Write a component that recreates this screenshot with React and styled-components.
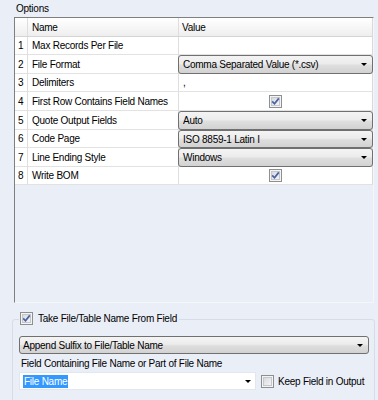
import React from "react";
import styled, { createGlobalStyle } from "styled-components";

const GlobalStyle = createGlobalStyle`
  body {
    margin: 0;
    background: #eaeef7;
  }
`;

const rows = [
  { n: 1, name: "Max Records Per File", kind: "text", value: "" },
  { n: 2, name: "File Format", kind: "combo", value: "Comma Separated Value (*.csv)" },
  { n: 3, name: "Delimiters", kind: "text", value: "," },
  { n: 4, name: "First Row Contains Field Names", kind: "check", value: true },
  { n: 5, name: "Quote Output Fields", kind: "combo", value: "Auto" },
  { n: 6, name: "Code Page", kind: "combo", value: "ISO 8859-1 Latin I" },
  { n: 7, name: "Line Ending Style", kind: "combo", value: "Windows" },
  { n: 8, name: "Write BOM", kind: "check", value: true },
];

const heights = [18, 19, 18, 19, 19, 18, 19, 18];

const Page = styled.div`
  width: 378px;
  height: 400px;
  overflow: hidden;
  background: #eaeef7;
  padding: 3px 0 0 12px;
  box-sizing: border-box;
  display: flex;
  flex-direction: column;
  font-family: "Liberation Sans", Arial, sans-serif;
  font-size: 10px;
  letter-spacing: -0.25px;
  color: #000;
`;

const Caption = styled.div`
  flex: none;
  margin-left: 4px;
  height: 14px;
  line-height: 12px;
`;

const Frame = styled.div`
  flex: none;
  margin-left: 2px;
  width: 360px;
  height: 286px;
  box-sizing: border-box;
  border: 1px solid #f4f6fa;
  border-top-color: #7f7f7f;
  border-left-color: #7f7f7f;
  background: #eaeef7;
`;

const Row = styled.div`
  display: grid;
  grid-template-columns: 13px 151px 193px;
  width: 358px;
  height: ${(p) => p.$h}px;
  box-sizing: border-box;
  border-right: 1px solid #d9d9d9;
  border-bottom: 1px solid ${(p) => (p.$header ? "#d5d5d5" : "#e2e2e2")};
  background: ${(p) =>
    p.$header ? "linear-gradient(#ffffff, #f7f7f7 50%, #eeeeee)" : "#ffffff"};
`;

const Cell = styled.div`
  display: flex;
  align-items: center;
  box-sizing: border-box;
  padding-left: ${(p) => p.$pad ?? 4}px;
  border-right: ${(p) => (p.$last ? "none" : "1px solid #dedede")};
  justify-content: ${(p) => (p.$center ? "center" : "flex-start")};
  white-space: nowrap;
  min-width: 0;
`;

const Combo = styled.div`
  flex: 1;
  align-self: stretch;
  margin: 0 -1px -1px -1px;
  display: flex;
  align-items: center;
  justify-content: space-between;
  padding: 0 5px 0 4px;
  border: 1px solid #707070;
  border-radius: 3px;
  background: linear-gradient(#f4f4f4 0%, #ececec 45%, #dedede 55%, #d2d2d2 100%);
  box-sizing: border-box;
  white-space: nowrap;
`;

const EditCombo = styled.div`
  width: 237px;
  height: 18px;
  box-sizing: border-box;
  display: flex;
  align-items: center;
  justify-content: space-between;
  padding: 0 4px 0 3px;
  background: #ffffff;
  border: 1px solid #e2e7ee;
`;

const Selected = styled.span`
  background: #3399ff;
  color: #ffffff;
  padding: 0 1px;
  line-height: 13px;
`;

const Group = styled.div`
  flex: none;
  position: relative;
  margin-top: 16px;
  width: 363px;
  height: 140px;
  box-sizing: border-box;
  border: 1px solid #d5dde8;
  border-radius: 3px;
  padding: 16px 5px 0 6px;
  display: flex;
  flex-direction: column;
`;

const GroupCaption = styled.label`
  position: absolute;
  top: -8px;
  left: 6px;
  display: flex;
  align-items: center;
  gap: 5px;
  padding: 0 2px 0 1px;
  background: #eaeef7;
`;

const GroupCombo = styled(Combo)`
  flex: none;
  height: 18px;
  margin: 0;
  padding-left: 3px;
`;

const FieldLabel = styled.div`
  margin: 3px 0 0 2px;
  height: 14px;
  line-height: 14px;
`;

const FieldRow = styled.div`
  display: flex;
  align-items: center;
  margin-top: 1px;
  gap: 5px;
`;

const CheckLabel = styled.label`
  display: flex;
  align-items: center;
  gap: 4px;
`;

function Arrow() {
  return (
    <svg width="6" height="3" viewBox="0 0 6 3">
      <path d="M0 0 H6 L3 3 Z" fill="#000" />
    </svg>
  );
}

function Check({ checked }) {
  const id = checked ? "cbg1" : "cbg0";
  return (
    <svg width="13" height="13" viewBox="0 0 13 13">
      <defs>
        <linearGradient id={id} x1="0" y1="0" x2="1" y2="1">
          <stop offset="0" stopColor="#d6d9dd" />
          <stop offset="1" stopColor="#f6f6f7" />
        </linearGradient>
      </defs>
      <rect x="0.5" y="0.5" width="12" height="12" fill="#f4f4f4" stroke="#8e8f8f" />
      <rect x="2.5" y="2.5" width="8" height="8" fill={`url(#${id})`} stroke="#c4c7cb" />
      {checked && (
        <path d="M3.2 6.3 L5.5 8.8 L9.8 3.4" fill="none" stroke="#4a62a3" strokeWidth="1.7" />
      )}
    </svg>
  );
}

function ValueCell({ row }) {
  if (row.kind === "combo") {
    return (
      <Cell $pad={0} $last>
        <Combo>
          <span>{row.value}</span>
          <Arrow />
        </Combo>
      </Cell>
    );
  }
  if (row.kind === "check") {
    return (
      <Cell $pad={0} $last $center>
        <Check checked={row.value} />
      </Cell>
    );
  }
  return <Cell $last>{row.value}</Cell>;
}

export default function App() {
  return (
    <Page>
      <GlobalStyle />
      <Caption>Options</Caption>
      <Frame>
        <Row $h={19} $header>
          <Cell $pad={0} />
          <Cell>Name</Cell>
          <Cell $pad={3} $last>Value</Cell>
        </Row>
        {rows.map((row, i) => (
          <Row key={row.n} $h={heights[i]}>
            <Cell $pad={3}>{row.n}</Cell>
            <Cell>{row.name}</Cell>
            <ValueCell row={row} />
          </Row>
        ))}
      </Frame>
      <Group>
        <GroupCaption>
          <Check checked />
          <span>Take File/Table Name From Field</span>
        </GroupCaption>
        <GroupCombo>
          <span>Append Sulfix to File/Table Name</span>
          <Arrow />
        </GroupCombo>
        <FieldLabel>Field Containing File Name or Part of File Name</FieldLabel>
        <FieldRow>
          <EditCombo>
            <Selected>File Name</Selected>
            <Arrow />
          </EditCombo>
          <CheckLabel>
            <Check checked={false} />
            <span>Keep Field in Output</span>
          </CheckLabel>
        </FieldRow>
      </Group>
    </Page>
  );
}
